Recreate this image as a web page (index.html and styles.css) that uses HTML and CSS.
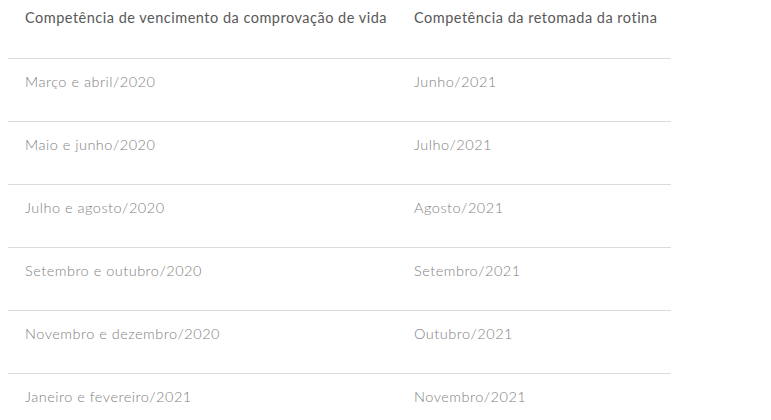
FILE: index.html
```html
<!DOCTYPE html>
<html lang="pt">
<head>
<meta charset="utf-8">
<link rel="stylesheet" href="styles.css">
</head>
<body>
<div class="table">
  <div class="row head">
    <div class="cell c1">Competência de vencimento da comprovação de vida</div>
    <div class="cell c2">Competência da retomada da rotina</div>
  </div>
  <div class="row">
    <div class="cell c1">Março e abril/2020</div>
    <div class="cell c2">Junho/2021</div>
  </div>
  <div class="row">
    <div class="cell c1">Maio e junho/2020</div>
    <div class="cell c2">Julho/2021</div>
  </div>
  <div class="row">
    <div class="cell c1">Julho e agosto/2020</div>
    <div class="cell c2">Agosto/2021</div>
  </div>
  <div class="row">
    <div class="cell c1">Setembro e outubro/2020</div>
    <div class="cell c2">Setembro/2021</div>
  </div>
  <div class="row">
    <div class="cell c1">Novembro e dezembro/2020</div>
    <div class="cell c2">Outubro/2021</div>
  </div>
  <div class="row">
    <div class="cell c1">Janeiro e fevereiro/2021</div>
    <div class="cell c2">Novembro/2021</div>
  </div>
</div>
</body>
</html>
```
FILE: styles.css
```css
html, body {
  margin: 0;
  padding: 0;
  background: #fff;
}
body {
  font-family: Lato, "Open Sans", sans-serif;
  overflow: hidden;
}
.table {
  width: 663px;
  margin-left: 8px;
}
.row {
  display: grid;
  grid-template-columns: 389px 1fr;
  border-top: 1px solid #dcdcdc;
  padding: 13px 0 29px;
  line-height: 20px;
  font-size: 14.5px;
  letter-spacing: 0.5px;
  color: #808080;
  font-weight: 300;
}
.row.head {
  border-top: none;
  padding: 8px 0 30px;
  color: #585858;
  font-weight: 400;
}
.cell {
  padding-left: 17px;
  white-space: nowrap;
}
```
